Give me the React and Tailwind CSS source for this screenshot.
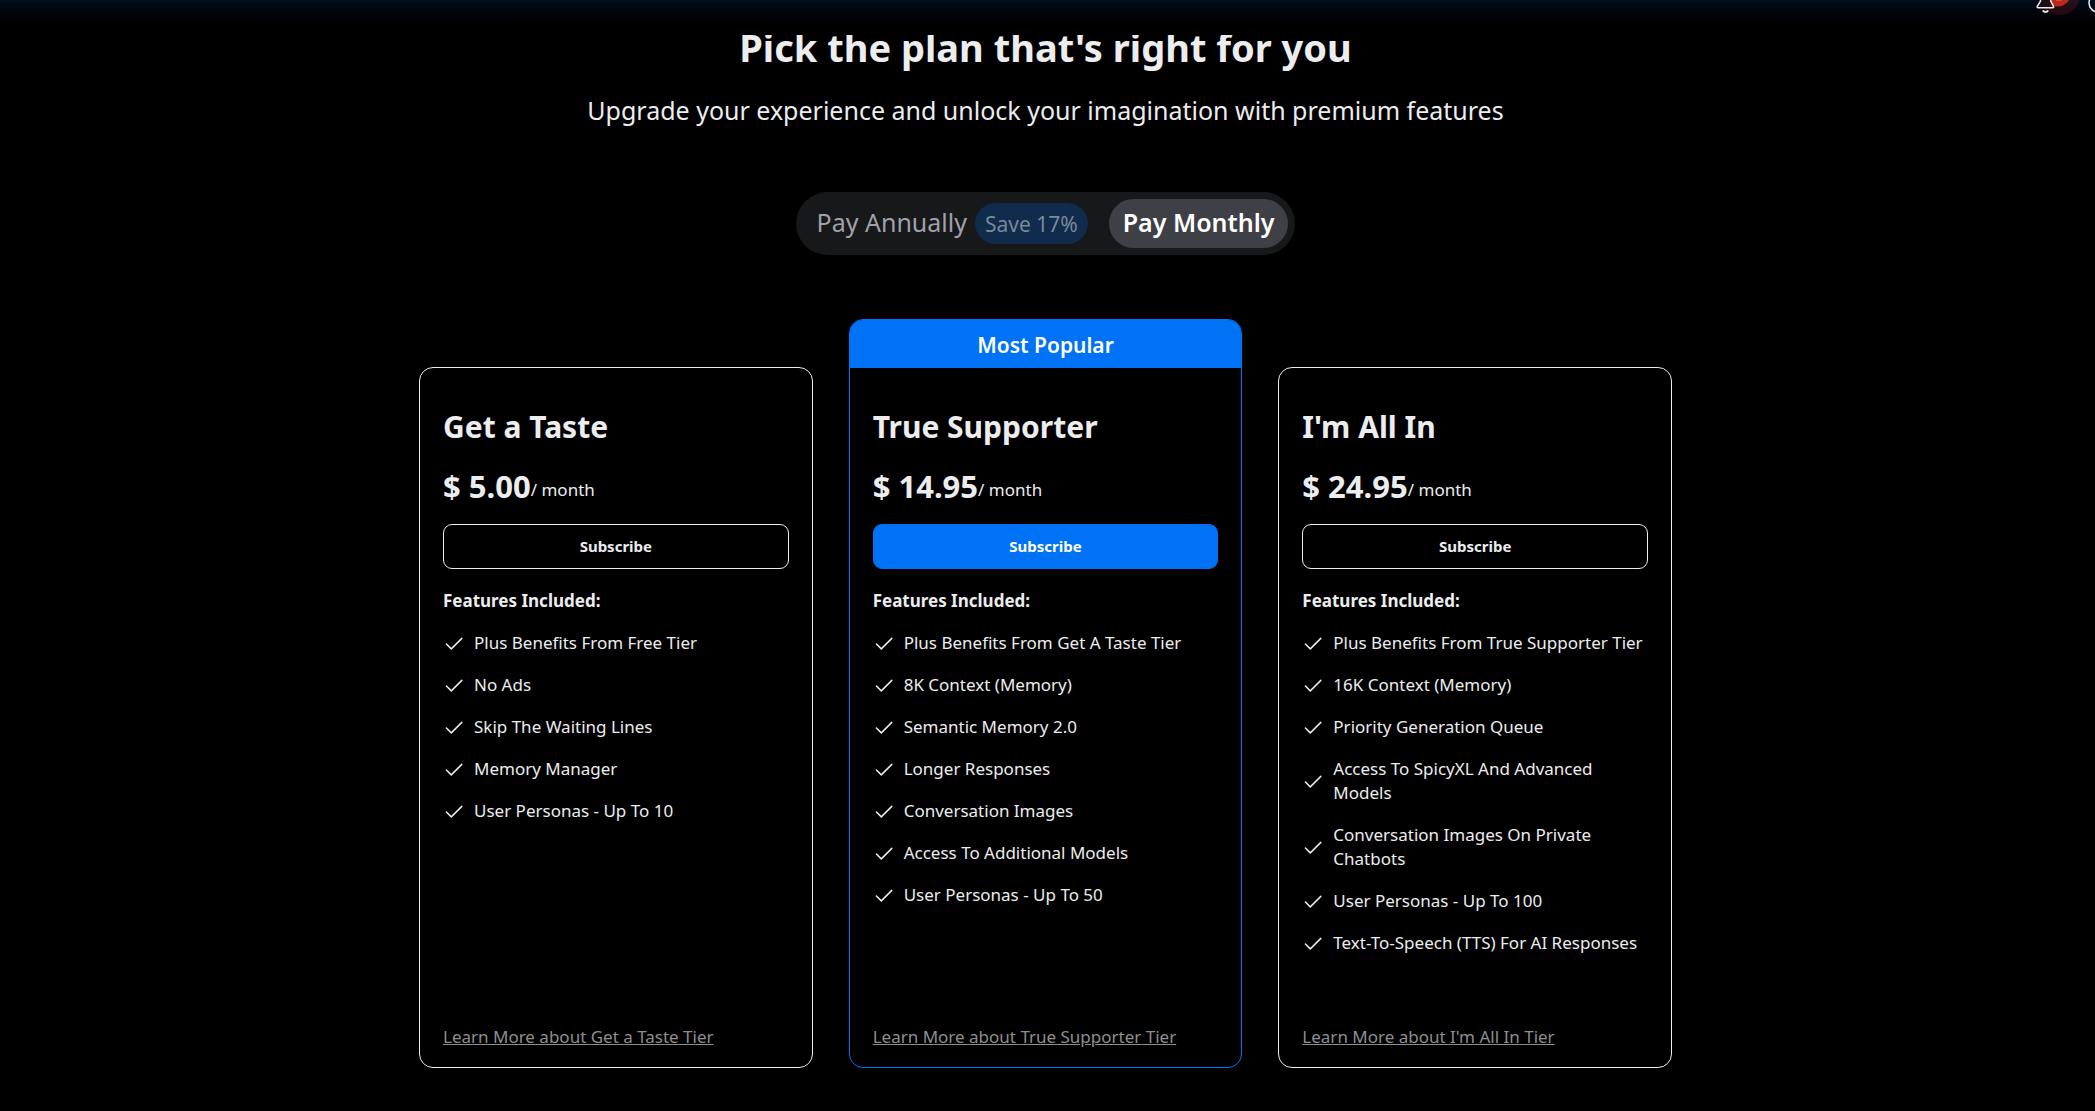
const plans = [
  {
    name: "Get a Taste",
    price: "$ 5.00",
    features: [
      "Plus Benefits From Free Tier",
      "No Ads",
      "Skip The Waiting Lines",
      "Memory Manager",
      "User Personas - Up To 10",
    ],
  },
  {
    name: "True Supporter",
    price: "$ 14.95",
    popular: true,
    features: [
      "Plus Benefits From Get A Taste Tier",
      "8K Context (Memory)",
      "Semantic Memory 2.0",
      "Longer Responses",
      "Conversation Images",
      "Access To Additional Models",
      "User Personas - Up To 50",
    ],
  },
  {
    name: "I'm All In",
    price: "$ 24.95",
    features: [
      "Plus Benefits From True Supporter Tier",
      "16K Context (Memory)",
      "Priority Generation Queue",
      "Access To SpicyXL And Advanced Models",
      "Conversation Images On Private Chatbots",
      "User Personas - Up To 100",
      "Text-To-Speech (TTS) For AI Responses",
    ],
  },
];

function CheckIcon() {
  return (
    <svg
      className="size-[22px] shrink-0"
      viewBox="0 0 22 22"
      fill="none"
      stroke="currentColor"
      strokeWidth="1.5"
      strokeLinecap="round"
      strokeLinejoin="round"
      aria-hidden="true"
    >
      <path d="M3.4 12l4.9 4.9L18.8 6.4" />
    </svg>
  );
}

function Header() {
  return (
    <header className="sticky top-0 z-10 flex h-[35px] justify-end overflow-hidden bg-linear-to-b from-[#000e1c] to-black">
      <button type="button" aria-label="Notifications" className="h-[35px] w-[63px]">
        <svg className="h-[35px] w-[63px]" viewBox="0 0 63 35" fill="none" aria-hidden="true">
          <circle cx="35" cy="-5" r="20" fill="#c8281e" fillOpacity="0.18" />
          <circle cx="33" cy="-6" r="12.5" fill="#b8281e" />
          <path d="M31 0h6" stroke="#ff4a35" strokeWidth="1.5" />
          <path
            d="M15.5-2v3.2L12.3 6.4c-.4.7 0 1.3.8 1.3h14.6c.8 0 1.2-.6.8-1.3L25.7 1.2V-2"
            fill="#1a1015"
            stroke="#f6e9ec"
            strokeWidth="1.5"
            strokeLinejoin="round"
          />
          <path d="M18.2 11c1.2 1 3.4 1 4.6 0" stroke="#f6e9ec" strokeWidth="1.7" strokeLinecap="round" />
        </svg>
      </button>
      <button type="button" aria-label="Account" className="h-[35px] w-[7px]">
        <svg className="h-[35px] w-[7px]" viewBox="0 0 7 35" fill="none" aria-hidden="true">
          <circle cx="10" cy="3" r="9" stroke="#ececee" strokeWidth="1.5" />
        </svg>
      </button>
    </header>
  );
}

function BillingToggle() {
  return (
    <div role="tablist" aria-label="Billing period" className="mt-16 flex gap-[7px] rounded-full bg-[#17181a] p-[7px]">
      <button
        type="button"
        role="tab"
        aria-selected="false"
        className="flex h-[49px] items-center gap-2 rounded-full px-[14px] text-[25px] leading-9 text-[#a1a1aa]"
      >
        <span className="pb-1">Pay Annually</span>
        <span className="flex h-[41px] items-center rounded-full bg-[#102b4b] px-[10px] text-[21px] leading-7 text-[#7a899c]">
          Save 17%
        </span>
      </button>
      <button
        type="button"
        role="tab"
        aria-selected="true"
        className="h-[49px] rounded-full bg-[#3f3f46] px-[14px] pb-1 text-[25px] leading-9 font-semibold text-white"
      >
        Pay Monthly
      </button>
    </div>
  );
}

function PlanCard({ plan }) {
  const border = plan.popular ? "border-[#0072f5]" : "mt-12 border-[#ecedee]";
  const button = plan.popular
    ? "border-[#0072f5] bg-[#0072f5] text-white"
    : "border-[#ecedee] text-[#ecedee]";
  return (
    <article className={`flex flex-col overflow-hidden rounded-[14px] border ${border}`}>
      {plan.popular && (
        <p className="bg-[#0072f5] pt-[7px] pb-[5px] text-center text-[21px] leading-9 font-semibold text-white">
          Most Popular
        </p>
      )}
      <div className="flex grow flex-col px-[23px] pt-[41px] pb-[18px]">
        <h2 className="text-[30px] leading-9 font-bold">{plan.name}</h2>
        <p className="mt-[23px] flex items-end">
          <span className="text-[31px] leading-9 font-bold">{plan.price}</span>
          <span className="pb-0.5 text-[17px] leading-6">/ month</span>
        </p>
        <button
          type="button"
          className={`mt-5 h-[45px] rounded-[9px] border text-[15px] font-bold ${button}`}
        >
          Subscribe
        </button>
        <h3 className="mt-5 text-[17px] leading-6 font-bold">Features Included:</h3>
        <ul className="mt-[18px] flex flex-col gap-[18px]">
          {plan.features.map((feature) => (
            <li key={feature} className="flex items-center gap-[9px] text-[17px] leading-6">
              <CheckIcon />
              <span>{feature}</span>
            </li>
          ))}
        </ul>
        <div className="mt-auto pt-[70px] text-[17px] leading-6">
          <a href="#learn-more" className="text-[#8e8e90] underline">
            Learn More about {plan.name} Tier
          </a>
        </div>
      </div>
    </article>
  );
}

export default function App() {
  return (
    <div className="min-h-screen bg-black font-['Noto_Sans',sans-serif] text-[#ecedee]">
      <Header />
      <main className="-mt-3 flex flex-col items-center pr-1 pb-10">
        <h1 className="text-center text-[38px] leading-[48px] font-bold">Pick the plan that's right for you</h1>
        <p className="mt-[21px] text-center text-[25px] leading-9">
          Upgrade your experience and unlock your imagination with premium features
        </p>
        <BillingToggle />
        <div className="mt-16 grid w-full max-w-[1253px] grid-cols-3 gap-9">
          {plans.map((plan) => (
            <PlanCard key={plan.name} plan={plan} />
          ))}
        </div>
      </main>
    </div>
  );
}
